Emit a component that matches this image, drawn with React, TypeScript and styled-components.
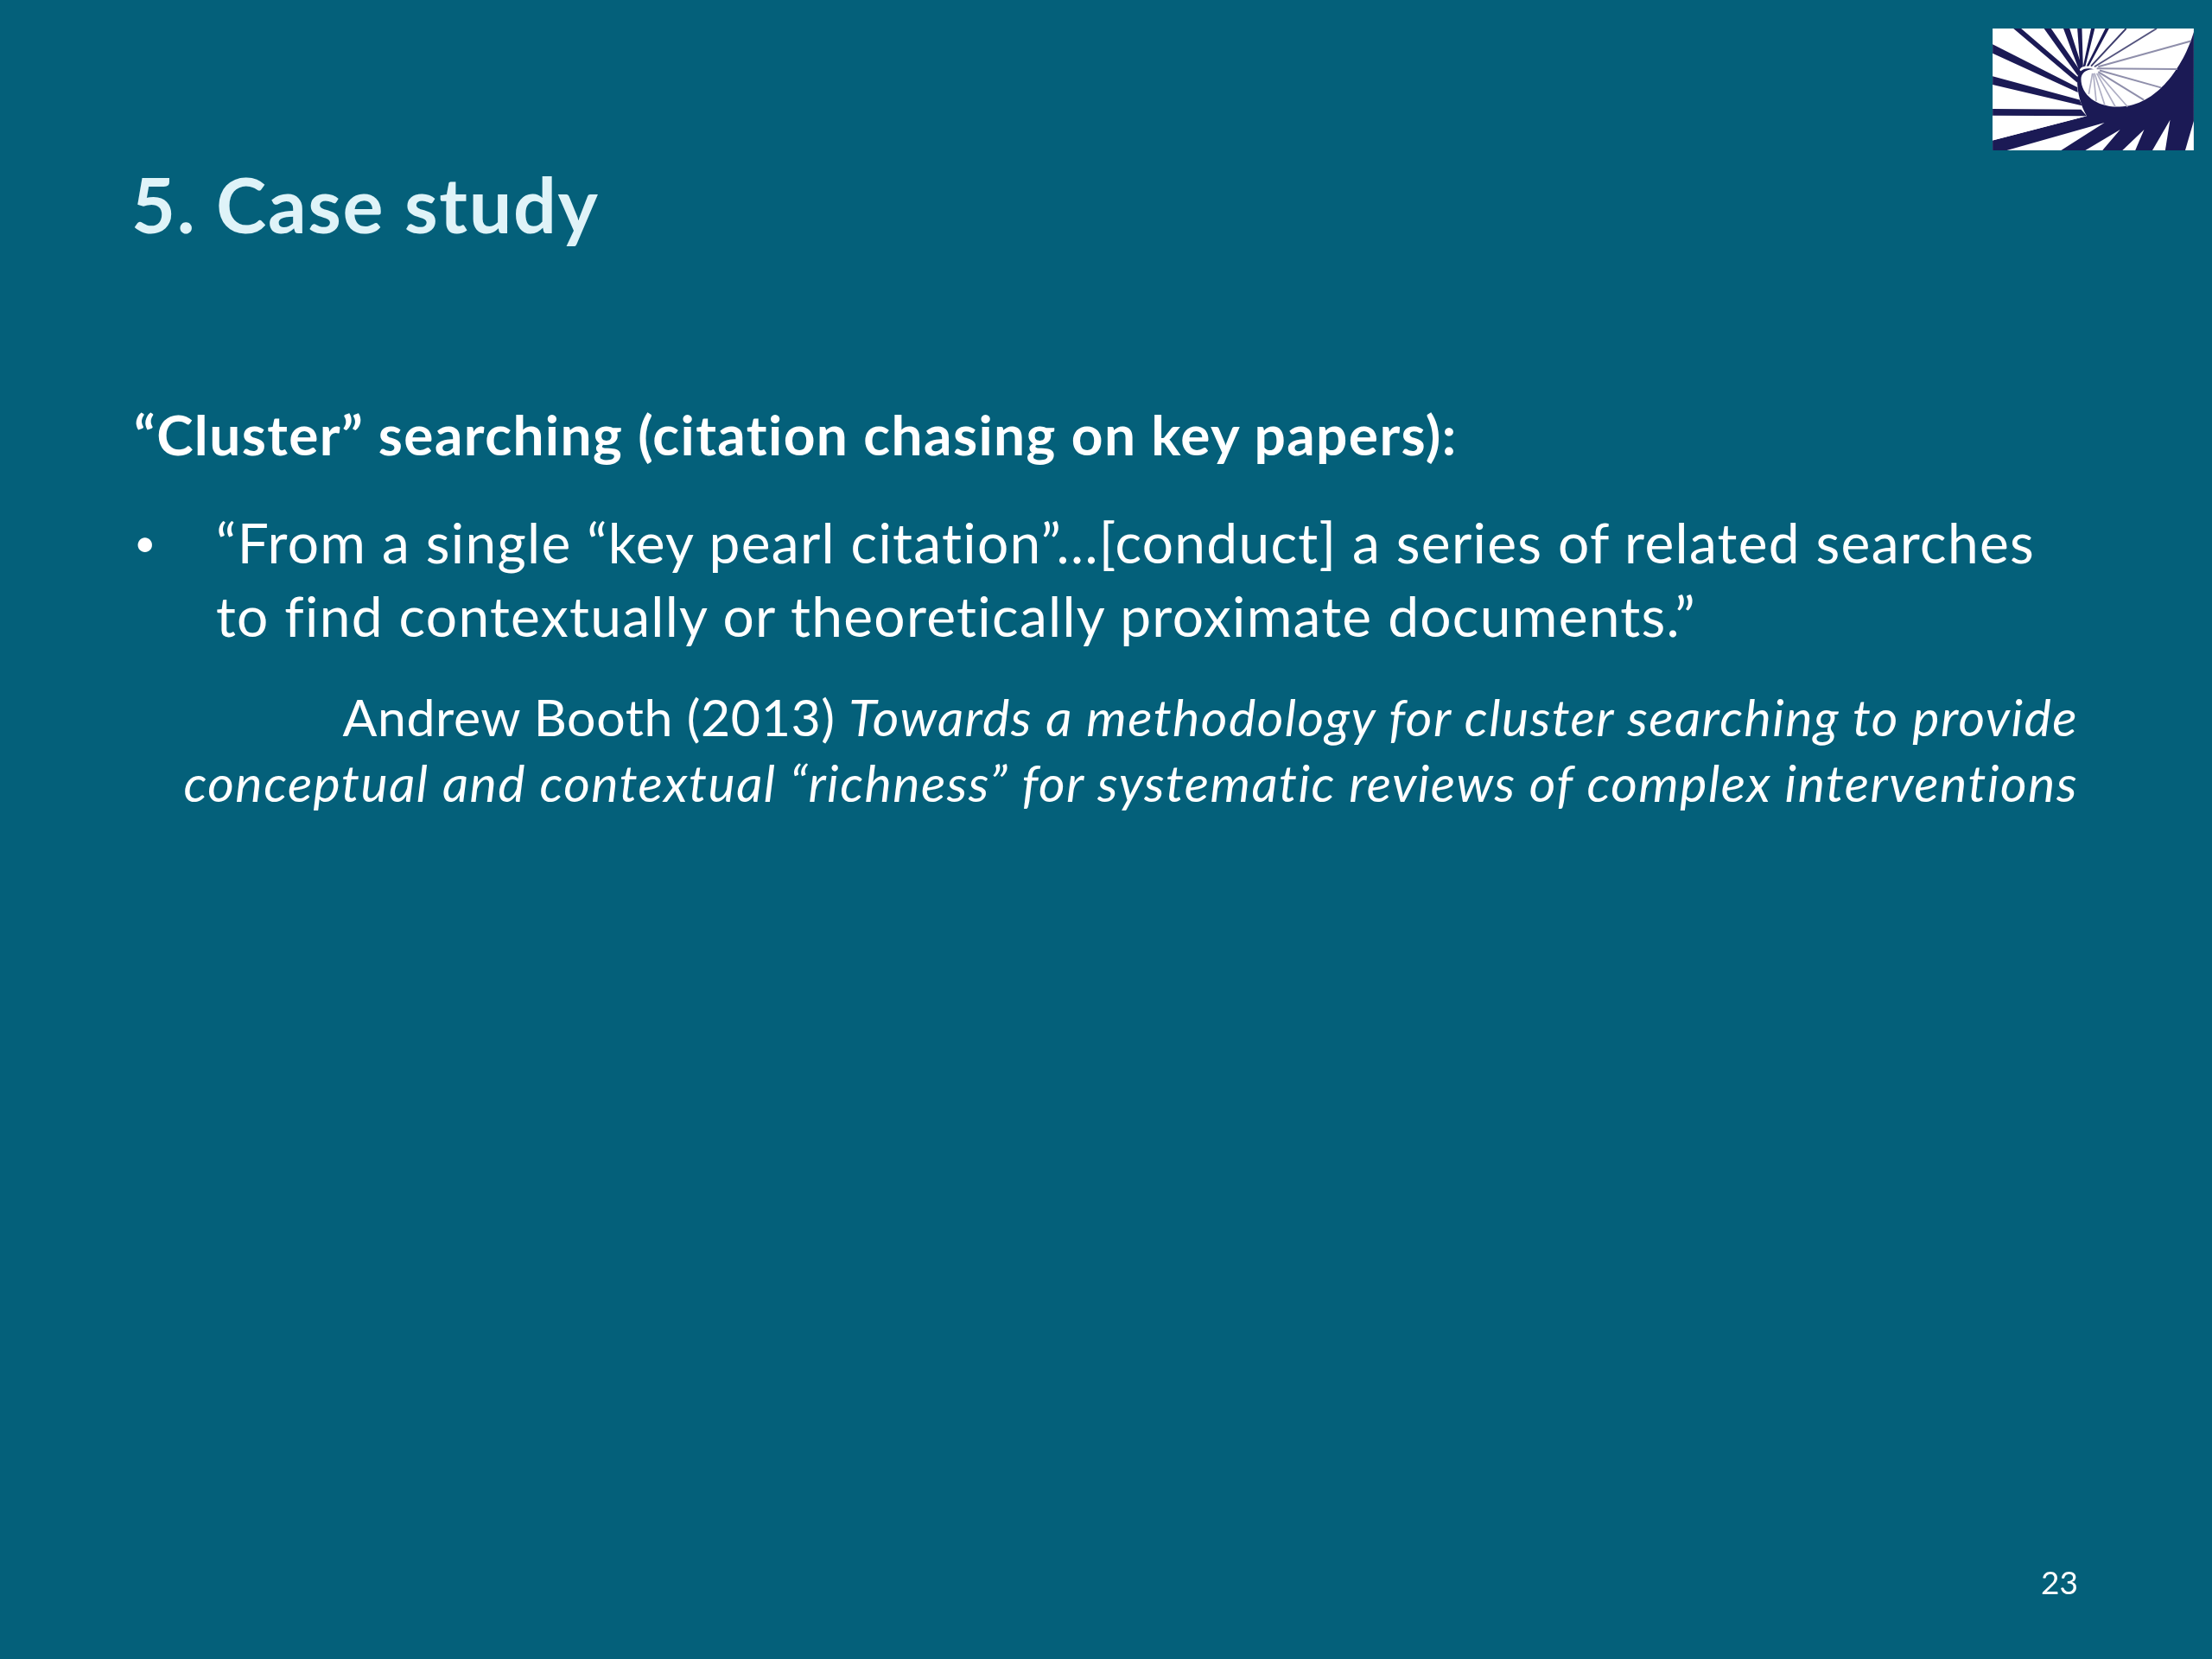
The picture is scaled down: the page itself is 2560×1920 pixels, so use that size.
import React from "react";
import styled, { createGlobalStyle } from "styled-components";

const Global = createGlobalStyle`
  html, body { margin: 0; padding: 0; background: #04607a; }
`;

const Slide = styled.main`
  width: 2560px;
  height: 1920px;
  box-sizing: border-box;
  padding: 33px 155px 0 155px;
  background: #04607a;
  display: flex;
  flex-direction: column;
  font-family: Lato, "Open Sans", sans-serif;
  font-variant-ligatures: none;
  color: #fff;
  overflow: hidden;
  filter: blur(0.7px);
`;

const TopRow = styled.header`
  display: flex;
  justify-content: flex-end;
  margin-right: -135px;
  height: 141px;
`;

const Logo = styled.svg`
  width: 235px;
  height: 141px;
  display: block;
`;

const Title = styled.h1`
  margin: 14px 0 0 -3px;
  font-size: 88px;
  line-height: 96px;
  font-weight: 700;
  letter-spacing: 1.6px;
  color: #dff3f8;
`;

const Lead = styled.p`
  margin: 181px 0 0;
  font-size: 64px;
  line-height: 76px;
  font-weight: 700;
  letter-spacing: 1.4px;
`;

const BulletRow = styled.div`
  display: flex;
  margin-top: 44px;
  font-size: 64px;
  line-height: 85px;
  letter-spacing: 1.3px;
`;

const Dot = styled.span`
  width: 95px;
  flex: none;
  font-size: 44px;
  box-sizing: border-box;
`;

const BulletText = styled.p`
  margin: 0;
  width: 2150px;
`;

const Citation = styled.p`
  margin: 37px 0 0;
  font-size: 59px;
  line-height: 76px;
  letter-spacing: 0.6px;
  text-align: right;
`;

const CitationTitle = styled.em`
  letter-spacing: 1.5px;
`;

const Footer = styled.footer`
  margin-top: auto;
  margin-bottom: 69px;
  text-align: right;
  font-size: 37px;
  line-height: 40px;
`;

export default function App() {
  return (
    <Slide>
      <Global />
      <TopRow>
        <Logo viewBox="75 38 705 427" aria-label="logo">
          <rect x="75" y="38" width="705" height="427" fill="#fff" />
          <path fill="#1b1a55" d="M780 50C745 170 650 310 520 312C440 315 385 270 385 215C385 195 405 178 432 182C400 170 372 185 372 215C370 260 385 310 405 345L75 430V465H780Z" />
          <g fill="#fff">
            <path d="M780 362L750 465H780Z" />
            <path d="M697 358L635 465H680Z" />
            <path d="M606 392L530 465H575Z" />
            <path d="M522 392L400 465H460Z" />
            <path d="M467 368L125 465H315Z" />
            <path d="M405 345L75 345V430Z" />
          </g>
          <g fill="#1b1a55">
            <path d="M148 38H175L378 212L372 228Z" />
            <path d="M255 38H280L385 190L373 202Z" />
            <path d="M323 38H345L388 172L378 184Z" />
            <path d="M372 38H388L392 172L382 176Z" />
            <path d="M420 38H433L400 170L392 172Z" />
            <path d="M470 38H483L412 170L404 170Z" />
            <path d="M75 93L75 125L374 262L372 244Z" />
            <path d="M75 205L75 235L388 308L380 288Z" />
            <path d="M75 320V343L405 345L385 322Z" />
          </g>
          <g stroke="#3c3c6c" strokeWidth="6" fill="none">
            <path d="M543 38L420 170" />
          </g>
          <g stroke="#55557f" strokeWidth="6" fill="none">
            <path d="M650 38L432 172" />
          </g>
          <g stroke="#8f8fab" strokeWidth="6" fill="none">
            <path d="M770 82L445 172" />
            <path d="M722 180L440 178" />
            <path d="M665 245L450 185" />
            <path d="M605 288L445 190" />
          </g>
          <g stroke="#aeaec4" strokeWidth="5" fill="none">
            <path d="M548 312L445 195" />
            <path d="M505 312L440 195" />
            <path d="M468 306L432 195" />
            <path d="M438 292L428 195" />
            <path d="M412 268L425 195" />
          </g>
        </Logo>
      </TopRow>
      <Title>5. Case study</Title>
      <Lead>“Cluster” searching (citation chasing on key papers):</Lead>
      <BulletRow>
        <Dot>•</Dot>
        <BulletText>“From a single “key pearl citation”…[conduct] a series of related searches to find contextually or theoretically proximate documents.”</BulletText>
      </BulletRow>
      <Citation>
        Andrew Booth (2013) <CitationTitle>Towards a methodology for cluster searching to provide</CitationTitle>
        <br />
        <CitationTitle>conceptual and contextual “richness” for systematic reviews of complex interventions</CitationTitle>
      </Citation>
      <Footer>23</Footer>
    </Slide>
  );
}
